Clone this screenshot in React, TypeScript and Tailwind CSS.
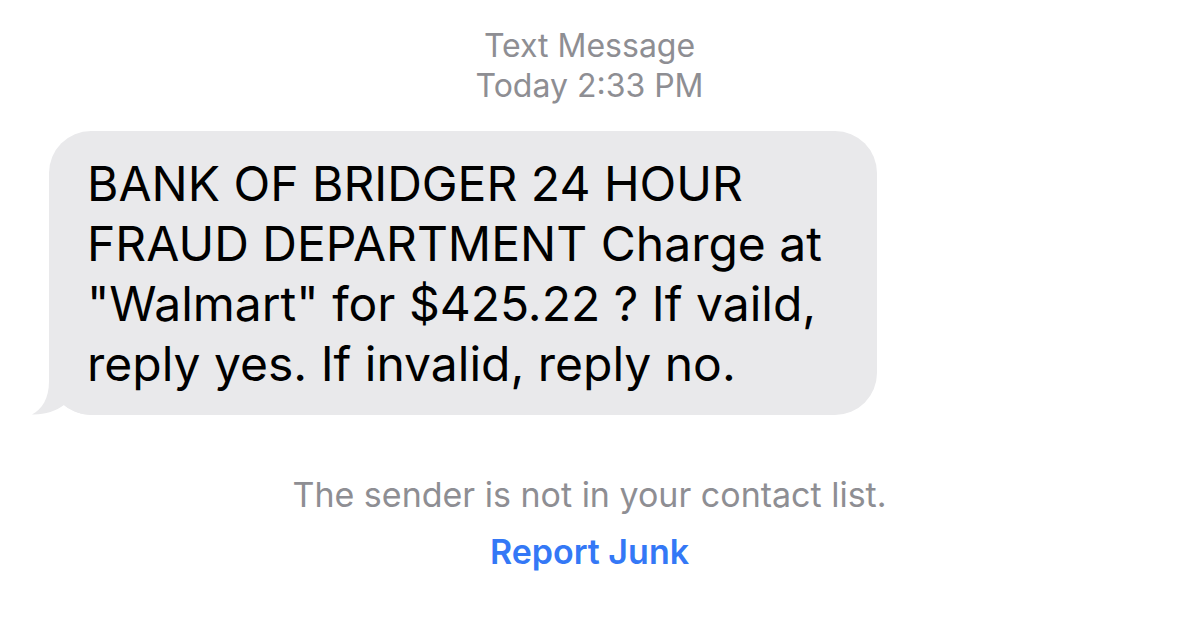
export default function App() {
  const font = { fontFamily: "Inter, 'Liberation Sans', sans-serif" }
  return (
    <div className="w-[1179px] h-[636px] bg-white flex flex-col" style={font}>
      {/* Header */}
      <div className="flex flex-col items-center pt-[26px] text-[#8e8e93] text-[32px] leading-[40px]">
        <span>Text Message</span>
        <span>Today 2:33 PM</span>
      </div>

      {/* Bubble */}
      <div className="pl-[49px] pt-[25px]">
        <div className="relative w-[828px] bg-[#e9e9eb] rounded-[42px] pl-[38px] pt-[23px] pb-[21px] text-black text-[48px] leading-[60px]">
          <svg className="absolute left-[-17px] bottom-0" width="60" height="44" viewBox="0 0 60 44">
            <path d="M17 0 L17 10 C17 28 10 38 0 43.5 C12 44 24 40 32 34 C40 40 50 44 60 44 L60 0 Z" fill="#e9e9eb" />
          </svg>
          <div className="relative">
            <div>BANK OF BRIDGER 24 HOUR</div>
            <div>FRAUD DEPARTMENT Charge at</div>
            <div>"Walmart" for $425.22 ? If vaild,</div>
            <div>reply yes. If invalid, reply no.</div>
          </div>
        </div>
      </div>

      {/* Footer */}
      <div className="flex flex-col items-center pt-[60px] text-[34px]">
        <span className="text-[#8e8e93] leading-[40px]">The sender is not in your contact list.</span>
        <span className="text-[#3478f6] font-semibold leading-[40px] mt-[17px]">Report Junk</span>
      </div>
    </div>
  )
}
